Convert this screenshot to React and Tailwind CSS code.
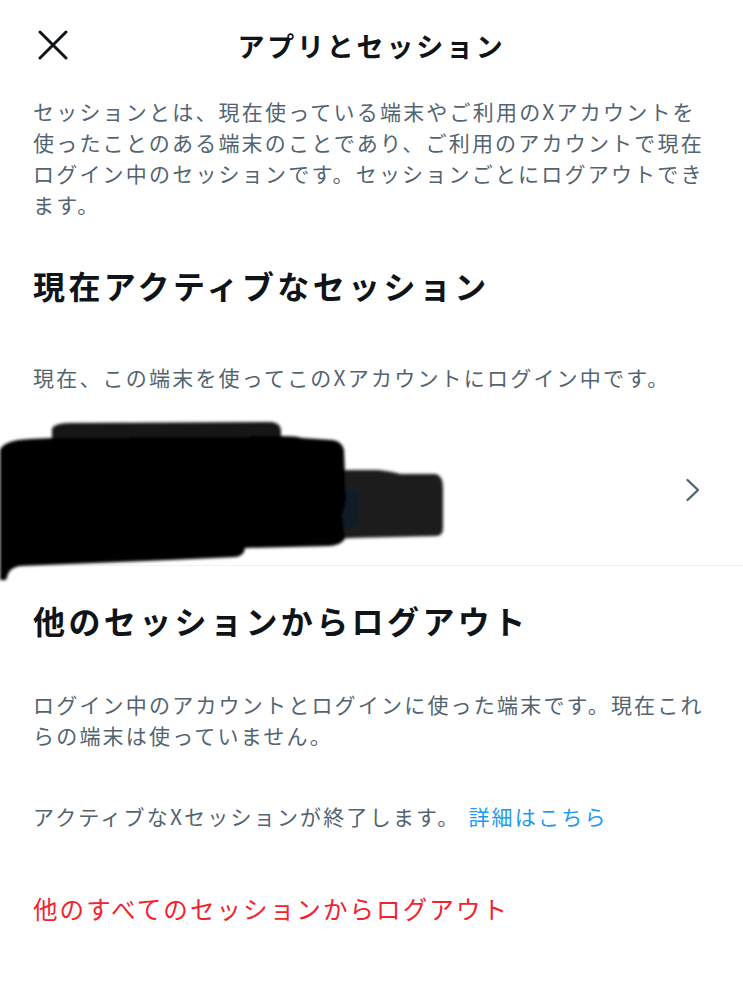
import React from 'react';

const FONT = { fontFamily: '"Noto Sans CJK JP", "Noto Sans", sans-serif' };

function CloseIcon() {
    return (
        <svg width="30" height="30" viewBox="0 0 30 30" fill="none">
            <path d="M2 2L28 28M28 2L2 28" stroke="#0f1419" strokeWidth="3" strokeLinecap="round" />
        </svg>
    );
}

function Chevron() {
    return (
        <svg width="16" height="24" viewBox="0 0 16 24" fill="none">
            <path d="M2.5 2L13 12L2.5 22" stroke="#536471" strokeWidth="2.4" strokeLinecap="round" strokeLinejoin="round" />
        </svg>
    );
}

// マスキング（黒塗り）部分
function Redaction() {
    return (
        <svg width="460" height="175" viewBox="0 0 460 175" className="absolute left-0 top-[-7px]">
            <defs>
                <filter id="soft" x="-10%" y="-10%" width="120%" height="120%">
                    <feGaussianBlur stdDeviation="1.8" />
                </filter>
            </defs>
            <g filter="url(#soft)">
                <path d="M330 66 Q336 62 350 62 L378 62 Q395 64 400 66 L436 66 Q443 68 443 80 L443 120 Q443 128 436 128 L350 130 L330 132 Z" fill="#1e1e1e" />
                <rect x="315" y="83" width="43" height="37" rx="5" fill="#0d1b28" />
                <path d="M52 20 Q56 15 70 15 L272 14 Q280 15 281 22 L281 34 L52 34 Z" fill="#141414" />
                <path d="M0 42 Q4 32 30 31 L52 30 L280 28 Q298 28 302 30 L332 32 Q342 33 344 42 L346 92 L342 108 L345 128 Q345 136 330 138 L245 140 Q244 148 236 149 L170 152 L20 158 Q10 160 8 166 L6 172 L0 172 Z" fill="#000000" />
            </g>
        </svg>
    );
}

export default function App() {
    return (
        <div className="w-[743px] min-h-[999px] bg-white" style={FONT}>
            {/* ヘッダー */}
            <div className="grid grid-cols-[1fr_auto_1fr] items-center h-[90px]">
                <div className="pl-[38px] flex items-center">
                    <CloseIcon />
                </div>
                <h1 className="text-[27px] font-bold tracking-[2.8px] text-[#0f1419] leading-none">アプリとセッション</h1>
                <div />
            </div>

            <div className="pl-[33px] pr-[32px]">
                <p className="mt-[6px] text-[21px] leading-[31px] tracking-[2.2px] text-[#536471]">
                    セッションとは、現在使っている端末やご利用のXアカウントを使ったことのある端末のことであり、ご利用のアカウントで現在ログイン中のセッションです。セッションごとにログアウトできます。
                </p>

                <h2 className="mt-[43px] text-[32px] leading-[44px] font-bold tracking-[3.4px] text-[#0f1419]">現在アクティブなセッション</h2>

                <p className="mt-[55px] text-[21px] leading-[31px] tracking-[2.2px] text-[#536471]">
                    現在、この端末を使ってこのXアカウントにログイン中です。
                </p>
            </div>

            {/* 端末 */}
            <div className="relative mt-[22px] h-[151px] flex items-center justify-end pr-[42px] border-b border-[#eff3f4]">
                <Redaction />
                <Chevron />
            </div>

            <div className="pl-[33px] pr-[32px]">
                <h2 className="mt-[32px] text-[32px] leading-[44px] font-bold tracking-[3.4px] text-[#0f1419]">他のセッションからログアウト</h2>

                <p className="mt-[47px] text-[21px] leading-[31px] tracking-[2.2px] text-[#536471]">
                    ログイン中のアカウントとログインに使った端末です。現在これらの端末は使っていません。
                </p>

                <p className="mt-[50px] text-[21px] leading-[31px] tracking-[2.2px] text-[#536471]">
                    アクティブなXセッションが終了します。<span className="ml-[8px] text-[#1d9bf0]">詳細はこちら</span>
                </p>

                <button className="mt-[59px] block text-[24.5px] leading-[36px] tracking-[2.1px] text-[#f4212e]">
                    他のすべてのセッションからログアウト
                </button>
            </div>
        </div>
    );
}
